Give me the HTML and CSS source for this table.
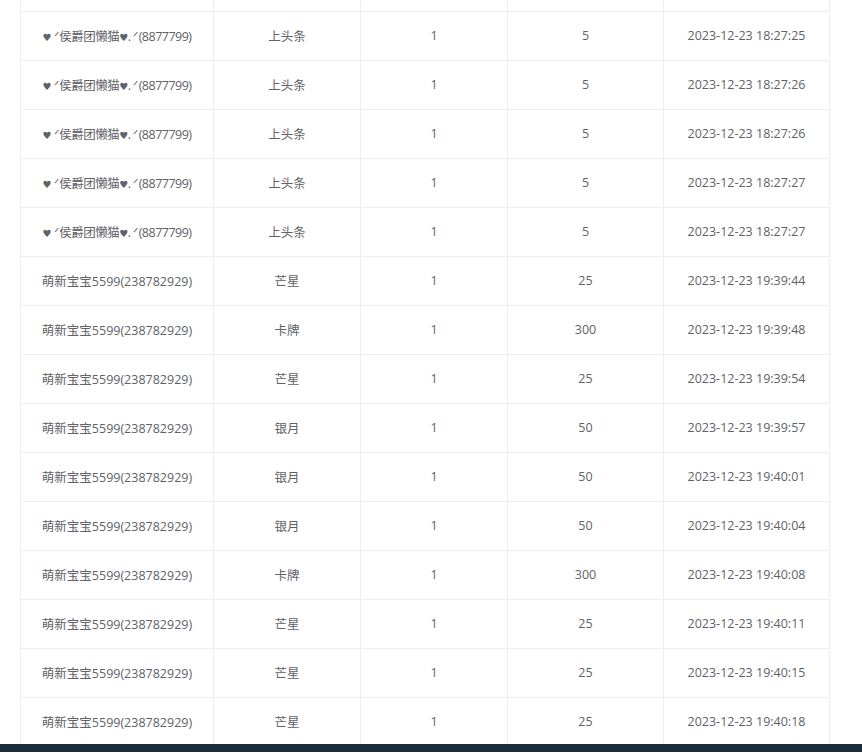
FILE: index.html
```html
<!DOCTYPE html>
<html lang="zh">
<head>
<meta charset="utf-8">
<link rel="stylesheet" href="styles.css">
</head>
<body>
<div class="page">
  <div class="scroll">
    <table class="grid">
      <colgroup>
        <col class="c1"><col class="c2"><col class="c3"><col class="c4"><col class="c5">
      </colgroup>
      <tbody>
        <tr class="stub"><td></td><td></td><td></td><td></td><td></td></tr>
        <tr><td class="deco"><span class="heart">♥</span> ᐟ侯爵团懒猫<span class="heart">♥</span>. ᐟ(8877799)</td><td>上头条</td><td>1</td><td>5</td><td>2023-12-23 18:27:25</td></tr>
        <tr><td class="deco"><span class="heart">♥</span> ᐟ侯爵团懒猫<span class="heart">♥</span>. ᐟ(8877799)</td><td>上头条</td><td>1</td><td>5</td><td>2023-12-23 18:27:26</td></tr>
        <tr><td class="deco"><span class="heart">♥</span> ᐟ侯爵团懒猫<span class="heart">♥</span>. ᐟ(8877799)</td><td>上头条</td><td>1</td><td>5</td><td>2023-12-23 18:27:26</td></tr>
        <tr><td class="deco"><span class="heart">♥</span> ᐟ侯爵团懒猫<span class="heart">♥</span>. ᐟ(8877799)</td><td>上头条</td><td>1</td><td>5</td><td>2023-12-23 18:27:27</td></tr>
        <tr><td class="deco"><span class="heart">♥</span> ᐟ侯爵团懒猫<span class="heart">♥</span>. ᐟ(8877799)</td><td>上头条</td><td>1</td><td>5</td><td>2023-12-23 18:27:27</td></tr>
        <tr><td>萌新宝宝5599(238782929)</td><td>芒星</td><td>1</td><td>25</td><td>2023-12-23 19:39:44</td></tr>
        <tr><td>萌新宝宝5599(238782929)</td><td>卡牌</td><td>1</td><td>300</td><td>2023-12-23 19:39:48</td></tr>
        <tr><td>萌新宝宝5599(238782929)</td><td>芒星</td><td>1</td><td>25</td><td>2023-12-23 19:39:54</td></tr>
        <tr><td>萌新宝宝5599(238782929)</td><td>银月</td><td>1</td><td>50</td><td>2023-12-23 19:39:57</td></tr>
        <tr><td>萌新宝宝5599(238782929)</td><td>银月</td><td>1</td><td>50</td><td>2023-12-23 19:40:01</td></tr>
        <tr><td>萌新宝宝5599(238782929)</td><td>银月</td><td>1</td><td>50</td><td>2023-12-23 19:40:04</td></tr>
        <tr><td>萌新宝宝5599(238782929)</td><td>卡牌</td><td>1</td><td>300</td><td>2023-12-23 19:40:08</td></tr>
        <tr><td>萌新宝宝5599(238782929)</td><td>芒星</td><td>1</td><td>25</td><td>2023-12-23 19:40:11</td></tr>
        <tr><td>萌新宝宝5599(238782929)</td><td>芒星</td><td>1</td><td>25</td><td>2023-12-23 19:40:15</td></tr>
        <tr><td>萌新宝宝5599(238782929)</td><td>芒星</td><td>1</td><td>25</td><td>2023-12-23 19:40:18</td></tr>
      </tbody>
    </table>
  </div>
  <div class="footer"></div>
</div>
</body>
</html>
```
FILE: styles.css
```css
html, body {
  margin: 0;
  padding: 0;
  background: #ffffff;
}
.page {
  width: 862px;
  height: 752px;
  display: flex;
  flex-direction: column;
  overflow: hidden;
}
.scroll {
  flex: 1;
  overflow: hidden;
  padding-left: 20px;
}
.grid {
  border-collapse: collapse;
  table-layout: fixed;
  width: 809px;
  font-family: "Open Sans", "Noto Sans CJK SC", sans-serif;
  font-size: 12.5px;
  color: #606266;
}
.c1 { width: 193px; }
.c2 { width: 147px; }
.c3 { width: 147px; }
.c4 { width: 156px; }
.c5 { width: 166px; }
.grid td {
  height: 47px;
  padding: 0 0 1px 0;
  text-align: center;
  vertical-align: middle;
  border: 1px solid #ebeef5;
  border-top: none;
  white-space: nowrap;
}
.grid .stub td {
  height: 11px;
  padding: 0;
}
.grid td.deco {
  letter-spacing: -0.5px;
}
.heart {
  font-family: "DejaVu Sans", sans-serif;
  font-size: 10px;
}
.footer {
  height: 8px;
  flex: none;
  background: #1d2b38;
}
```
